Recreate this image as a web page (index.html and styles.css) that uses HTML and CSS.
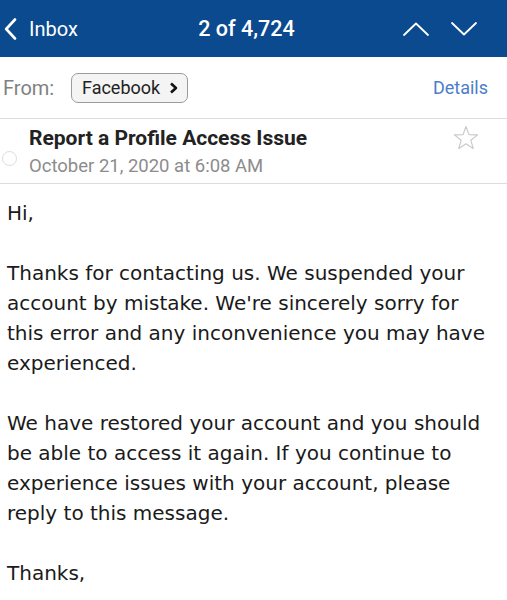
FILE: index.html
```html
<!DOCTYPE html>
<html>
  <head>
    <meta charset="utf-8">
    <title>Report a Profile Access Issue</title>
    <link rel="stylesheet" href="styles.css">
  </head>
  <body>
    <!-- Barra superior -->
    <div class="topbar">
      <div class="back">
        <svg class="back-icon" width="13" height="22" viewBox="0 0 13 22">
          <path d="M11 1.5 L2.2 11 L11 20.5" fill="none" stroke="#fff" stroke-width="2.6" stroke-linecap="round" stroke-linejoin="round"/>
        </svg>
        <span>Inbox</span>
      </div>
      <div class="count">2 of 4,724</div>
      <div class="arrows">
        <svg width="26" height="14" viewBox="0 0 26 14">
          <path d="M1 13 L13 1.5 L25 13" fill="none" stroke="#fff" stroke-width="1.8" stroke-linecap="round" stroke-linejoin="round"/>
        </svg>
        <svg width="26" height="14" viewBox="0 0 26 14">
          <path d="M1 1 L13 12.5 L25 1" fill="none" stroke="#fff" stroke-width="1.8" stroke-linecap="round" stroke-linejoin="round"/>
        </svg>
      </div>
    </div>

    <!-- Remitente -->
    <div class="from-row">
      <span class="from-label">From:</span>
      <span class="sender">Facebook
        <svg width="9" height="12" viewBox="0 0 9 12">
          <path d="M2 1.5 L7 6 L2 10.5" fill="none" stroke="#111" stroke-width="2.6" stroke-linejoin="round"/>
        </svg>
      </span>
      <span class="details">Details</span>
    </div>

    <!-- Asunto -->
    <div class="subject-row">
      <span class="radio"></span>
      <div class="subject-text">
        <div class="subject">Report a Profile Access Issue</div>
        <div class="date">October 21, 2020 at 6:08 AM</div>
      </div>
      <svg class="star" width="26" height="25" viewBox="0 0 26 25">
        <path d="M13 1.5 L16 9.6 L24.6 9.9 L17.8 15.2 L20.2 23.5 L13 18.7 L5.8 23.5 L8.2 15.2 L1.4 9.9 L10 9.6 Z" fill="none" stroke="#c8c8c8" stroke-width="1.1" stroke-linejoin="round"/>
      </svg>
    </div>

    <!-- Cuerpo del mensaje -->
    <div class="message">
      <p>Hi,</p>
      <p>Thanks for contacting us. We suspended your account by mistake. We're sincerely sorry for this error and any inconvenience you may have experienced.</p>
      <p>We have restored your account and you should be able to access it again. If you continue to experience issues with your account, please reply to this message.</p>
      <p>Thanks,</p>
    </div>
  </body>
</html>
```

FILE: styles.css
```css
body {
  margin: 0;
  font-family: Roboto, "Noto Sans", Arial, sans-serif;
  background: #fff;
  overflow: hidden;
}

.topbar {
  height: 57px;
  background: #0b4a8f;
  color: #fff;
  display: grid;
  grid-template-columns: 1fr auto 1fr;
  align-items: center;
  font-size: 20px;
}

.back {
  display: flex;
  align-items: center;
  padding-left: 4px;
  gap: 12px;
}

.count {
  font-size: 21.5px;
  font-weight: 500;
  padding-right: 14px;
}

.arrows {
  display: flex;
  justify-content: flex-end;
  gap: 22px;
  padding-right: 30px;
}

.from-row {
  height: 61px;
  display: flex;
  align-items: center;
  border-bottom: 1px solid #dcdcdc;
  padding-left: 3px;
  padding-right: 19px;
}

.from-label {
  font-size: 20px;
  color: #808080;
  width: 68px;
}

.sender {
  display: flex;
  align-items: center;
  gap: 9px;
  height: 28px;
  padding: 0 9px 0 10px;
  border: 1px solid #9c9c9c;
  border-radius: 7px;
  background: #f4f4f4;
  font-size: 18px;
  color: #222;
}

.details {
  margin-left: auto;
  font-size: 18px;
  color: #4a7ec7;
}

.subject-row {
  height: 64px;
  display: flex;
  align-items: center;
  border-bottom: 1px solid #dcdcdc;
  padding-left: 2px;
  padding-right: 28px;
}

.radio {
  width: 13px;
  height: 13px;
  border: 1.5px solid #dcdcdc;
  border-radius: 50%;
  margin-top: 15px;
}

.subject-text {
  margin-left: 12px;
}

.subject {
  font-size: 21px;
  font-weight: bold;
  color: #222;
}

.date {
  font-size: 18.5px;
  color: #8c8c8c;
  margin-top: 5px;
}

.star {
  margin-left: auto;
  margin-top: -28px;
}

.message {
  padding: 14px 7px 0 7px;
  font-family: "DejaVu Sans", Verdana, sans-serif;
  font-size: 20px;
  line-height: 30px;
  color: #1a1a1a;
}

.message p {
  margin: 0 0 30px 0;
}
```
